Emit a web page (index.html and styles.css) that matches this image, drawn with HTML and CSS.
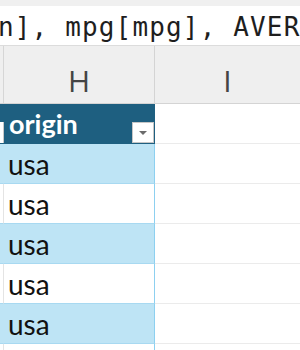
FILE: index.html
```html
<!DOCTYPE html>
<html lang="en">
<head>
    <meta charset="UTF-8">
    <title>Sheet</title>
    <link rel="stylesheet" href="styles.css">
</head>
<body>
    <div class="formula-bar">
        <span class="formula-text">n], mpg[mpg], AVERAGE(</span>
    </div>

    <div class="col-heads">
        <div class="col-head col-g"></div>
        <div class="col-head col-h">H</div>
        <div class="col-head col-i">I</div>
    </div>

    <div class="table-head">
        <div class="th col-g"><span class="filter-edge"></span></div>
        <div class="th col-h">
            <span class="th-label">origin</span>
            <span class="filter-btn"><span class="caret"></span></span>
        </div>
        <div class="th col-i"></div>
    </div>

    <div class="row band">
        <div class="cell col-g"></div>
        <div class="cell col-h">usa</div>
        <div class="cell col-i"></div>
    </div>
    <div class="row">
        <div class="cell col-g"></div>
        <div class="cell col-h">usa</div>
        <div class="cell col-i"></div>
    </div>
    <div class="row band">
        <div class="cell col-g"></div>
        <div class="cell col-h">usa</div>
        <div class="cell col-i"></div>
    </div>
    <div class="row">
        <div class="cell col-g"></div>
        <div class="cell col-h">usa</div>
        <div class="cell col-i"></div>
    </div>
    <div class="row band">
        <div class="cell col-g"></div>
        <div class="cell col-h">usa</div>
        <div class="cell col-i"></div>
    </div>
    <div class="row">
        <div class="cell col-g"></div>
        <div class="cell col-h">usa</div>
        <div class="cell col-i"></div>
    </div>
</body>
</html>
```

FILE: styles.css
```css
body {
    margin: 0;
    width: 300px;
    height: 350px;
    overflow: hidden;
    background-color: #f0f0f0;
    font-family: "Lato", "Noto Sans", sans-serif;
}

/* Formula bar */
.formula-bar {
    margin-top: 6px;
    height: 40px;
    padding-top: 2px;
    box-sizing: border-box;
    background-color: white;
    border-bottom: 1px solid #dcdcdc;
    white-space: nowrap;
    overflow: hidden;
}

.formula-text {
    display: block;
    margin-left: -2px;
    font-family: "DejaVu Sans Mono", monospace;
    font-size: 26px;
    letter-spacing: 1.15px;
    line-height: 38px;
    color: #1e1e1e;
}

/* Column letters */
.col-heads {
    display: flex;
    height: 58px;
    box-sizing: border-box;
    border-bottom: 1px solid #d4d4d4;
    background-color: #efefef;
}

.col-head {
    box-sizing: border-box;
    padding-top: 15px;
    font-family: "Open Sans", sans-serif;
    font-size: 30px;
    line-height: 40px;
    color: #444;
    text-align: center;
}

.col-g {
    width: 4px;
    flex: none;
}

.col-h {
    width: 151px;
    flex: none;
}

.col-i {
    flex: 1;
}

.col-heads .col-g {
    border-right: 1px solid #d6d6d6;
}

.col-heads .col-h {
    border-right: 1px solid #d4d4d4;
}

/* Table header row */
.table-head {
    display: flex;
    height: 40px;
    background-color: white;
}

.th {
    box-sizing: border-box;
    height: 40px;
}

.th.col-g,
.th.col-h {
    background-color: #1e5f80;
}

.th.col-g {
    display: flex;
    align-items: flex-end;
    overflow: hidden;
}

.filter-edge {
    width: 3px;
    height: 21px;
    margin-bottom: 1px;
    background-color: white;
    border-right: 1px solid #c8c8c8;
}

.th.col-h {
    display: flex;
    align-items: flex-end;
    justify-content: space-between;
    padding-left: 5px;
}

.th-label {
    align-self: center;
    font-size: 27px;
    font-weight: bold;
    color: white;
    line-height: 40px;
}

.filter-btn {
    display: flex;
    align-items: center;
    justify-content: center;
    width: 22px;
    height: 21px;
    margin: 0 1px 1px 0;
    box-sizing: border-box;
    background-color: white;
    border: 1px solid #c6c6c6;
}

.caret {
    width: 0;
    height: 0;
    border-left: 4px solid transparent;
    border-right: 4px solid transparent;
    border-top: 4px solid #6b6b6b;
}

.th.col-i {
    border-bottom: 1px solid #ebebeb;
}

/* Data rows */
.row {
    display: flex;
    height: 40px;
    background-color: white;
}

.cell {
    box-sizing: border-box;
    height: 40px;
    border-bottom: 1px solid #ebebeb;
}

.row .col-g {
    border-right: 1px solid #e4e4e4;
    border-bottom-color: #a8d9f1;
}

.row .col-h {
    padding-left: 4px;
    font-size: 28px;
    line-height: 40px;
    color: #111;
    border-right: 1px solid #8dd0f0;
    border-bottom-color: #a8d9f1;
}

.band .col-g,
.band .col-h {
    background-color: #bee4f5;
}

.band .col-g {
    border-right-color: #bee4f5;
}
```
